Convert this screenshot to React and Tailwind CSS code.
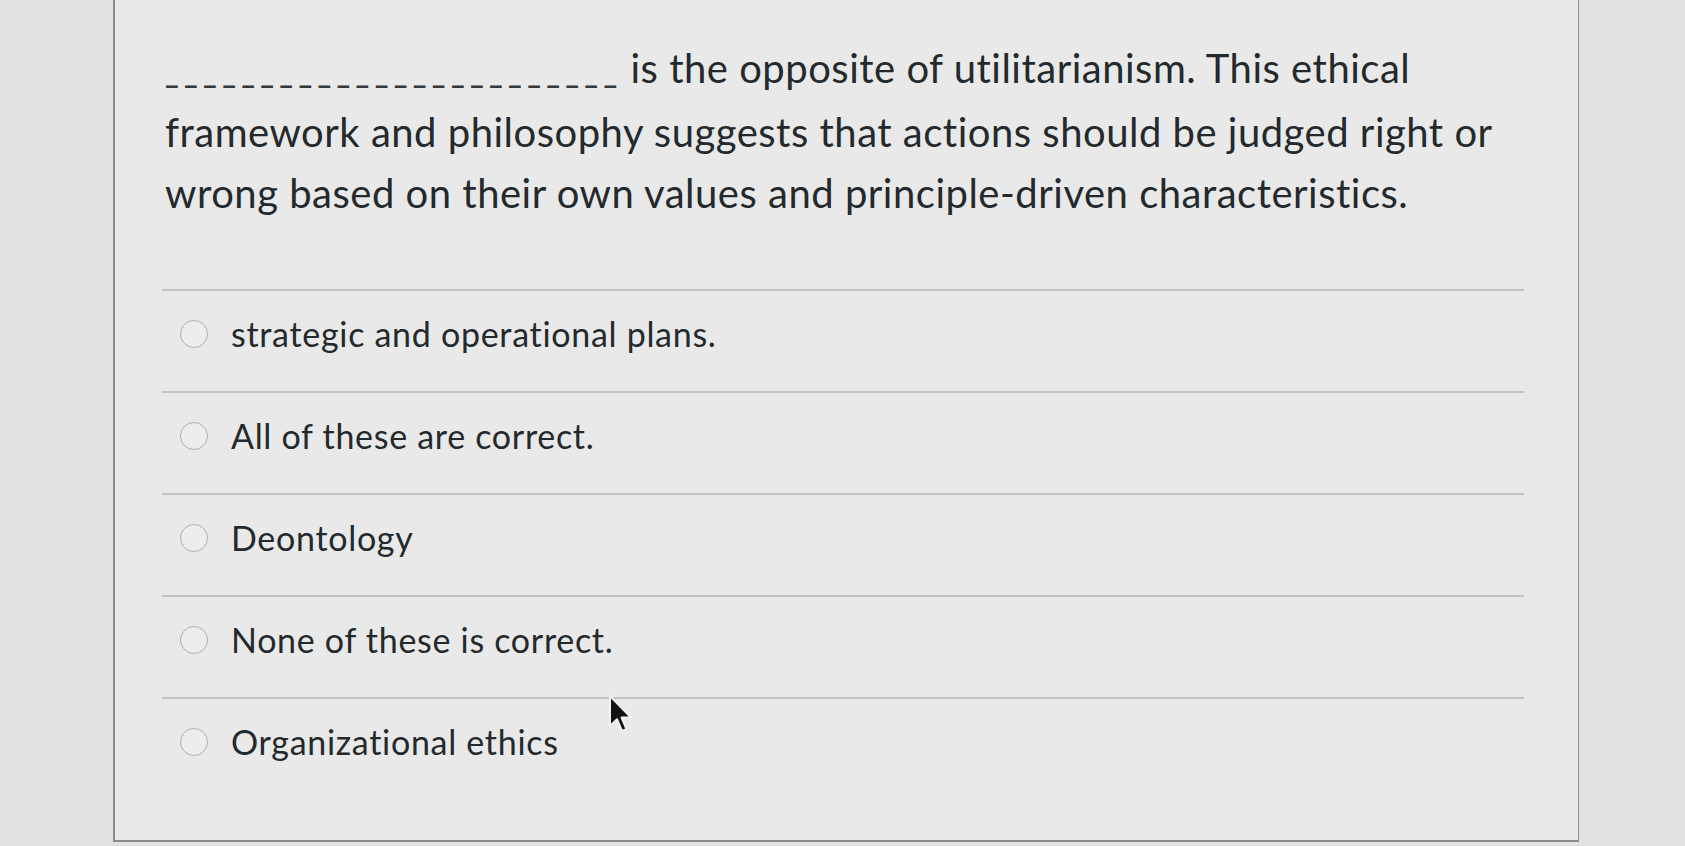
import React from "react";

const options = [
  "strategic and operational plans.",
  "All of these are correct.",
  "Deontology",
  "None of these is correct.",
  "Organizational ethics",
];

function Cursor() {
  return (
    <svg
      className="absolute left-[608px] top-[694px]"
      width="24"
      height="40"
      viewBox="0 0 12 20"
    >
      <path
        d="M1 1 L1 16 L4.5 12.6 L7 18.5 L9.2 17.6 L6.8 11.8 L11.5 11.8 Z"
        fill="#111"
        stroke="#f2f2f2"
        strokeWidth="1"
        strokeLinejoin="round"
      />
    </svg>
  );
}

export default function App() {
  return (
    <div
      className="relative w-[1685px] h-[846px] overflow-hidden bg-[#e0e1e0] pl-[113px]"
      style={{ fontFamily: "Lato, 'Open Sans', sans-serif" }}
    >
      <div className="w-[1466px] h-[842px] bg-[#e8e9e8] border-l-2 border-r border-b-2 border-[#8a8c8c] pl-[47px] pr-[54px] pt-[38px] text-[#24292d]">
        <div className="pl-[3px] text-[40px] leading-[61px] tracking-[0.5px] mb-[65px] whitespace-nowrap">
          <span className="text-[29.5px] tracking-[5.3px] text-[#33383c] font-bold">
            ________________________
          </span>
          <span className="ml-[8px]">
            is the opposite of utilitarianism. This ethical
          </span>
          <br />
          framework and philosophy suggests that actions should be judged right
          or
          <br />
          wrong based on their own values and principle-driven characteristics.
        </div>
        {options.map((o) => (
          <div key={o}>
            <div className="h-[2px] bg-[#c2c4c4]" />
            <div className="h-[100px] pt-[23px] flex items-start">
              <div className="flex items-center h-[40px] pl-[18px]">
                <span className="w-[28px] h-[28px] rounded-full border-[1.5px] border-[#aeb0b0] bg-[#eceded] mr-[23px] -mt-[1px]" />
                <span className="text-[34px] leading-[40px] tracking-[0.7px]">
                  {o}
                </span>
              </div>
            </div>
          </div>
        ))}
      </div>
      <Cursor />
    </div>
  );
}
